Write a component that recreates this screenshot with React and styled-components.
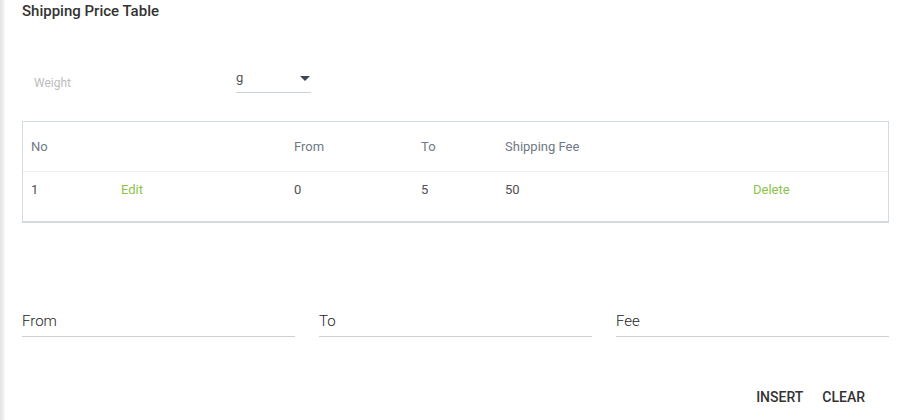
import React from 'react';
import styled, { createGlobalStyle } from 'styled-components';

const Global = createGlobalStyle`
  html, body {
    margin: 0;
    padding: 0;
    background: #fff;
  }
  body {
    font-family: Roboto, "Liberation Sans", sans-serif;
  }
`;

const Page = styled.div`
  position: relative;
  min-height: 420px;
  box-sizing: border-box;
  padding: 1px 28px 0 22px;
  background: #fff;
  overflow: hidden;
  &::before {
    content: '';
    position: absolute;
    left: 0;
    top: 0;
    bottom: 0;
    width: 5px;
    background: linear-gradient(to right, #e2e2e2, #ececec 50%, #fafafa);
  }
`;

const Title = styled.h2`
  margin: 0;
  font-size: 15px;
  font-weight: 500;
  line-height: 20px;
  color: #333;
`;

const WeightRow = styled.div`
  display: flex;
  align-items: flex-end;
  margin-top: 42px;
  padding-left: 12px;
  height: 30px;
`;

const Label = styled.div`
  width: 202px;
  font-size: 12px;
  color: #bdbdbd;
  line-height: 14px;
  margin-bottom: 3px;
`;

const Select = styled.div`
  width: 75px;
  height: 30px;
  box-sizing: border-box;
  display: flex;
  justify-content: space-between;
  align-items: flex-start;
  border-bottom: 1px solid #c9d2d8;
  padding-top: 7px;
  font-size: 13px;
  color: #555;
`;

const Caret = styled.span`
  width: 0;
  height: 0;
  margin: 6px 1px 0 0;
  border-left: 5px solid transparent;
  border-right: 5px solid transparent;
  border-top: 5px solid #3c4650;
`;

const Table = styled.div`
  margin-top: 28px;
  border: 1px solid #d3dbe0;
  border-bottom-width: 2px;
  padding-bottom: 15px;
`;

const Row = styled.div`
  display: grid;
  grid-template-columns: 90px 173px 127px 84px 248px 1fr;
  align-items: center;
  padding-left: 8px;
  height: ${p => (p.$head ? '49px' : '34px')};
  border-bottom: ${p => (p.$head ? '1px solid #eef1f3' : 'none')};
  font-size: 13px;
  color: ${p => (p.$head ? '#6f7a85' : '#4f4f4f')};
`;

const Action = styled.span`
  color: #8bc34a;
  cursor: pointer;
`;

const Inputs = styled.div`
  display: grid;
  grid-template-columns: repeat(3, 1fr);
  column-gap: 24px;
  margin-top: 83px;
`;

const Field = styled.div`
  height: 31px;
  box-sizing: border-box;
  border-bottom: 1px solid #cfcfcf;
  font-size: 15px;
  font-weight: 300;
  color: #222;
  padding-top: 6px;
`;

const Buttons = styled.div`
  display: flex;
  justify-content: flex-end;
  gap: 3px;
  margin-top: 48px;
  padding-right: 16px;
`;

const Button = styled.button`
  background: none;
  border: none;
  padding: 4px 8px;
  font-family: Roboto, "Liberation Sans", sans-serif;
  font-size: 14px;
  font-weight: 500;
  color: #333;
  cursor: pointer;
`;

const rows = [{ no: 1, from: 0, to: 5, fee: 50 }];

export default function App() {
  return (
    <Page>
      <Global />
      <Title>Shipping Price Table</Title>
      <WeightRow>
        <Label>Weight</Label>
        <Select>
          <span>g</span>
          <Caret />
        </Select>
      </WeightRow>
      <Table>
        <Row $head>
          <span>No</span>
          <span />
          <span>From</span>
          <span>To</span>
          <span>Shipping Fee</span>
          <span />
        </Row>
        {rows.map(r => (
          <Row key={r.no}>
            <span>{r.no}</span>
            <Action>Edit</Action>
            <span>{r.from}</span>
            <span>{r.to}</span>
            <span>{r.fee}</span>
            <Action>Delete</Action>
          </Row>
        ))}
      </Table>
      <Inputs>
        <Field>From</Field>
        <Field>To</Field>
        <Field>Fee</Field>
      </Inputs>
      <Buttons>
        <Button>INSERT</Button>
        <Button>CLEAR</Button>
      </Buttons>
    </Page>
  );
}
